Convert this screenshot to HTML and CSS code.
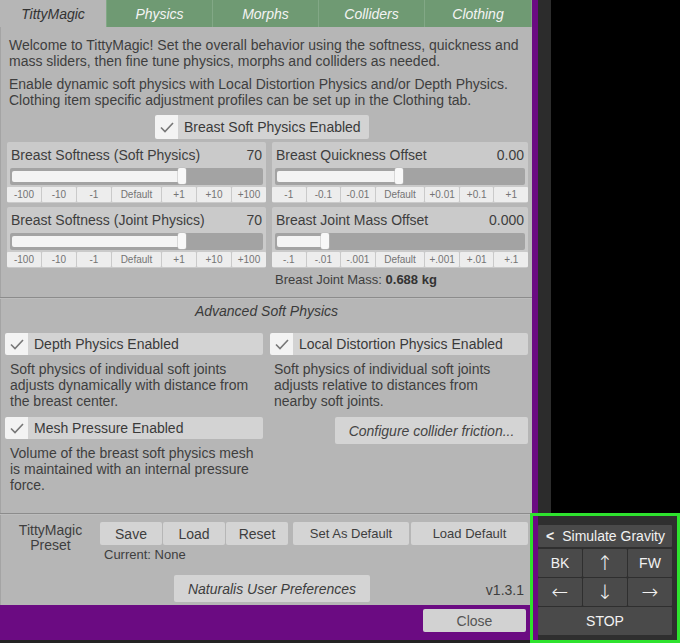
FILE: index.html
```html
<!DOCTYPE html>
<html>
<head>
<meta charset="utf-8">
<link rel="stylesheet" href="styles.css">
</head>
<body>
<div class="screen">
  <div class="app">
    <div class="panel">
      <div class="tabs">
        <div class="tab active">TittyMagic</div>
        <div class="tab">Physics</div>
        <div class="tab">Morphs</div>
        <div class="tab">Colliders</div>
        <div class="tab">Clothing</div>
      </div>
      <div class="intro">
        <p>Welcome to TittyMagic! Set the overall behavior using the softness, quickness and mass sliders, then fine tune physics, morphs and colliders as needed.</p>
        <p>Enable dynamic soft physics with Local Distortion Physics and/or Depth Physics. Clothing item specific adjustment profiles can be set up in the Clothing tab.</p>
      </div>
      <div class="toggle top-toggle">
        <span class="box"><svg width="14" height="11" viewBox="0 0 14 11"><polyline points="1,5.5 5,9.5 13,1" fill="none" stroke="#777" stroke-width="1.6"/></svg></span>
        <span class="label">Breast Soft Physics Enabled</span>
      </div>
      <div class="sliders">
        <div class="slider">
          <div class="s-head"><span>Breast Softness (Soft Physics)</span><span>70</span></div>
          <div class="track"><div class="fill" style="width:68%"></div><div class="handle"></div></div>
          <div class="steps"><span>-100</span><span>-10</span><span>-1</span><span class="def">Default</span><span>+1</span><span>+10</span><span>+100</span></div>
        </div>
        <div class="slider">
          <div class="s-head"><span>Breast Quickness Offset</span><span>0.00</span></div>
          <div class="track"><div class="fill" style="width:49%"></div><div class="handle"></div></div>
          <div class="steps"><span>-1</span><span>-0.1</span><span>-0.01</span><span class="def">Default</span><span>+0.01</span><span>+0.1</span><span>+1</span></div>
        </div>
        <div class="slider">
          <div class="s-head"><span>Breast Softness (Joint Physics)</span><span>70</span></div>
          <div class="track"><div class="fill" style="width:68%"></div><div class="handle"></div></div>
          <div class="steps"><span>-100</span><span>-10</span><span>-1</span><span class="def">Default</span><span>+1</span><span>+10</span><span>+100</span></div>
        </div>
        <div class="slider">
          <div class="s-head"><span>Breast Joint Mass Offset</span><span>0.000</span></div>
          <div class="track"><div class="fill" style="width:19%"></div><div class="handle"></div></div>
          <div class="steps"><span>-.1</span><span>-.01</span><span>-.001</span><span class="def">Default</span><span>+.001</span><span>+.01</span><span>+.1</span></div>
        </div>
        <div></div>
        <div class="mass">Breast Joint Mass: <b>0.688 kg</b></div>
      </div>
      <div class="divider"></div>
      <div class="adv-title">Advanced Soft Physics</div>
      <div class="adv">
        <div class="adv-col">
          <div class="toggle wide">
            <span class="box"><svg width="14" height="11" viewBox="0 0 14 11"><polyline points="1,5.5 5,9.5 13,1" fill="none" stroke="#777" stroke-width="1.6"/></svg></span>
            <span class="label">Depth Physics Enabled</span>
          </div>
          <p class="desc">Soft physics of individual soft joints adjusts dynamically with distance from the breast center.</p>
          <div class="toggle wide second">
            <span class="box"><svg width="14" height="11" viewBox="0 0 14 11"><polyline points="1,5.5 5,9.5 13,1" fill="none" stroke="#777" stroke-width="1.6"/></svg></span>
            <span class="label">Mesh Pressure Enabled</span>
          </div>
          <p class="desc">Volume of the breast soft physics mesh is maintained with an internal pressure force.</p>
        </div>
        <div class="adv-col right">
          <div class="toggle wide">
            <span class="box"><svg width="14" height="11" viewBox="0 0 14 11"><polyline points="1,5.5 5,9.5 13,1" fill="none" stroke="#777" stroke-width="1.6"/></svg></span>
            <span class="label">Local Distortion Physics Enabled</span>
          </div>
          <p class="desc">Soft physics of individual soft joints adjusts relative to distances from nearby soft joints.</p>
          <div class="btn italic configure">Configure collider friction...</div>
        </div>
      </div>
      <div class="divider bottom-div"></div>
      <div class="preset-row">
        <div class="preset-label">TittyMagic<br>Preset</div>
        <div class="preset-main">
          <div class="btn-row">
            <div class="btn b-small">Save</div>
            <div class="btn b-small">Load</div>
            <div class="btn b-small">Reset</div>
            <div class="btn b-set">Set As Default</div>
            <div class="btn b-load">Load Default</div>
          </div>
          <div class="current">Current: None</div>
        </div>
      </div>
      <div class="prefs-row">
        <div class="btn italic prefs">Naturalis User Preferences</div>
        <div class="version">v1.3.1</div>
      </div>
    </div>
    <div class="footer">
      <div class="btn close">Close</div>
    </div>
    <div class="bottom-edge"></div>
  </div>
  <div class="side-strip"></div>
  <div class="void"></div>

  <div class="gravity">
    <div class="g-edge"></div>
    <div class="g-body">
      <div class="g-btn g-title"><span class="lt">&lt;</span>Simulate Gravity</div>
      <div class="g-grid">
        <div class="g-btn">BK</div>
        <div class="g-btn arrow">↑</div>
        <div class="g-btn">FW</div>
        <div class="g-btn arrow">←</div>
        <div class="g-btn arrow">↓</div>
        <div class="g-btn arrow">→</div>
        <div class="g-btn stop">STOP</div>
      </div>
    </div>
  </div>
</div>
</body>
</html>
```

FILE: styles.css
```css
* { box-sizing: border-box; }
html, body { margin: 0; padding: 0; background: #000; }
body { font-family: "Liberation Sans", Arial, sans-serif; color: #3e3e3e; }

.screen {
  position: relative;
  width: 680px;
  height: 643px;
  display: flex;
  overflow: hidden;
  background: #000;
}

.app { width: 538px; display: flex; flex-direction: column; }

.panel {
  width: 538px;
  height: 605px;
  background: #b6b6b6;
  border-right: 6px solid #6b0b82;
  border-left: 1px solid #a4a4a4;
  display: flex;
  flex-direction: column;
}

/* tabs */
.tabs {
  display: grid;
  grid-template-columns: 106px 105px 105px 105px 106px;
  column-gap: 1px;
  height: 27px;
  margin-left: -1px;
  background: #82a886;
}
.tab {
  background: #6f9a73;
  color: #f4f4f4;
  font-style: italic;
  font-size: 14px;
  display: flex;
  align-items: center;
  justify-content: center;
}
.tab.active { background: #b6b6b6; color: #333; }

/* intro */
.intro { padding: 0 8px; margin-top: 10px; }
.intro p { margin: 0; font-size: 14px; line-height: 16px; color: #3e3e3e; }
.intro p + p { margin-top: 7px; }

/* toggles */
.toggle {
  display: flex;
  height: 24px;
  font-size: 14px;
  color: #3a3a3a;
}
.toggle .box {
  width: 23px;
  background: #f3f3f3;
  display: flex;
  align-items: center;
  justify-content: center;
  border-radius: 2px 0 0 2px;
}
.toggle .label {
  flex: 1;
  background: #d3d3d3;
  display: flex;
  align-items: center;
  padding-left: 6px;
  border-radius: 0 2px 2px 0;
}
.top-toggle { width: 214px; margin-left: 154px; margin-top: 7px; }

/* sliders */
.sliders {
  display: grid;
  grid-template-columns: 259px 256px;
  column-gap: 6px;
  row-gap: 4px;
  padding-left: 6px;
  margin-top: 3px;
}
.slider {
  background: #cacaca;
  border-radius: 2px;
  padding: 3px 2px 1px 2px;
  height: 61px;
}
.s-head {
  display: flex;
  justify-content: space-between;
  height: 20px;
  line-height: 20px;
  font-size: 14px;
  color: #3e3e3e;
  padding: 0 2px 0 2px;
}
.track {
  position: relative;
  margin: 3px 1px 0 1px;
  height: 17px;
  background: #a3a3a3;
  border-radius: 2px;
  padding: 3px 2px;
  display: flex;
}
.fill {
  height: 11px;
  background: #f4f4f4;
  border-radius: 2px;
}
.handle {
  width: 8px;
  height: 16px;
  margin-top: -3px;
  margin-left: -3px;
  background: #f8f8f8;
  border-radius: 2px;
  box-shadow: 0 0 0 0.5px #bbb;
}
.steps {
  display: flex;
  gap: 1px;
  margin-top: 2px;
  height: 15px;
  margin-left: -2px;
  margin-right: -2px;
}
.steps span {
  flex: 1;
  background: #ededed;
  color: #747474;
  font-size: 10px;
  display: flex;
  align-items: center;
  justify-content: center;
  border-radius: 1px;
}
.steps span.def { flex: 1.45; }
.mass { font-size: 13px; line-height: 16px; color: #3e3e3e; padding-left: 3px; margin-top: 0px; }
.mass b { color: #333; }

.divider {
  height: 1px;
  background: #8c8c8c;
  margin-top: 9px;
  margin-left: -1px;
  box-shadow: 0 1px 0 #bdbdbd;
}
.adv-title {
  text-align: center;
  font-style: italic;
  font-size: 14px;
  line-height: 16px;
  color: #3a3a3a;
  margin-top: 5px;
}

.adv {
  display: grid;
  grid-template-columns: 258px 258px;
  column-gap: 7px;
  padding-left: 4px;
  margin-top: 14px;
  height: 160px;
}
.toggle.wide { height: 22px; }
.toggle.wide .box { width: 23px; }
.toggle.wide .label { padding-left: 6px; }
.desc {
  margin: 6px 0 0 0;
  padding-left: 5px;
  font-size: 14px;
  line-height: 16px;
  color: #3e3e3e;
}
.adv-col.right .desc { padding-left: 4px; padding-right: 22px; }
.toggle.second { margin-top: 8px; }

.btn {
  background: #d4d4d4;
  color: #3e3e3e;
  font-size: 14px;
  display: flex;
  align-items: center;
  justify-content: center;
  border-radius: 2px;
}
.italic { font-style: italic; }
.configure {
  width: 193px;
  height: 27px;
  margin-left: 65px;
  margin-top: 8px;
  color: #444;
}

.bottom-div { margin-top: 20px; }

.preset-row { display: flex; margin-top: 8px; }
.preset-label {
  width: 99px;
  text-align: center;
  font-size: 14px;
  line-height: 15px;
  color: #3e3e3e;
  padding-top: 1px;
}
.preset-main { display: flex; flex-direction: column; }
.btn-row { display: flex; height: 23px; }
.b-small { width: 62px; margin-right: 1px; }
.b-set { width: 116px; margin-left: 4px; font-size: 13px; }
.b-load { width: 117px; margin-left: 2px; font-size: 13px; }
.current { font-size: 13px; line-height: 15px; margin-top: 2px; padding-left: 4px; color: #3e3e3e; }

.prefs-row { display: flex; align-items: center; margin-top: 13px; }
.prefs { width: 196px; height: 27px; margin-left: 173px; }
.version { margin-left: auto; padding-right: 8px; padding-top: 3px; font-size: 14px; color: #3e3e3e; }

.footer {
  height: 35px;
  background: #6b0b82;
  display: flex;
  justify-content: flex-end;
  padding: 4px 12px 0 0;
}
.close { width: 103px; height: 23px; background: #d2d2d2; color: #555; }
.bottom-edge { height: 3px; background: #232323; }

.side-strip { width: 13px; background: #2c2c2c; }
.void { flex: 1; background: #000; }

/* gravity overlay */
.gravity {
  position: absolute;
  left: 530px;
  top: 513px;
  width: 150px;
  height: 130px;
  border: 3px solid #2ee32e;
  background: #2f2f2f;
  display: flex;
}
.g-edge { width: 5px; background: #6b0b82; }
.g-body { padding-top: 9px; }
.g-btn {
  background: #4a4a4a;
  color: #f2f2f2;
  font-size: 14px;
  display: flex;
  align-items: center;
  justify-content: center;
  border-radius: 1px;
}
.g-title {
  width: 134px;
  height: 22px;
  justify-content: flex-start;
  padding-left: 8px;
}
.g-title .lt { font-weight: bold; margin-right: 8px; }
.g-grid {
  display: grid;
  grid-template-columns: 44px 44px 44px;
  grid-auto-rows: 28px;
  gap: 1px;
  margin-top: 2px;
}
.arrow { font-family: "DejaVu Sans", sans-serif; font-size: 20px; font-weight: 300; }
.stop { grid-column: 1 / 4; }
```
